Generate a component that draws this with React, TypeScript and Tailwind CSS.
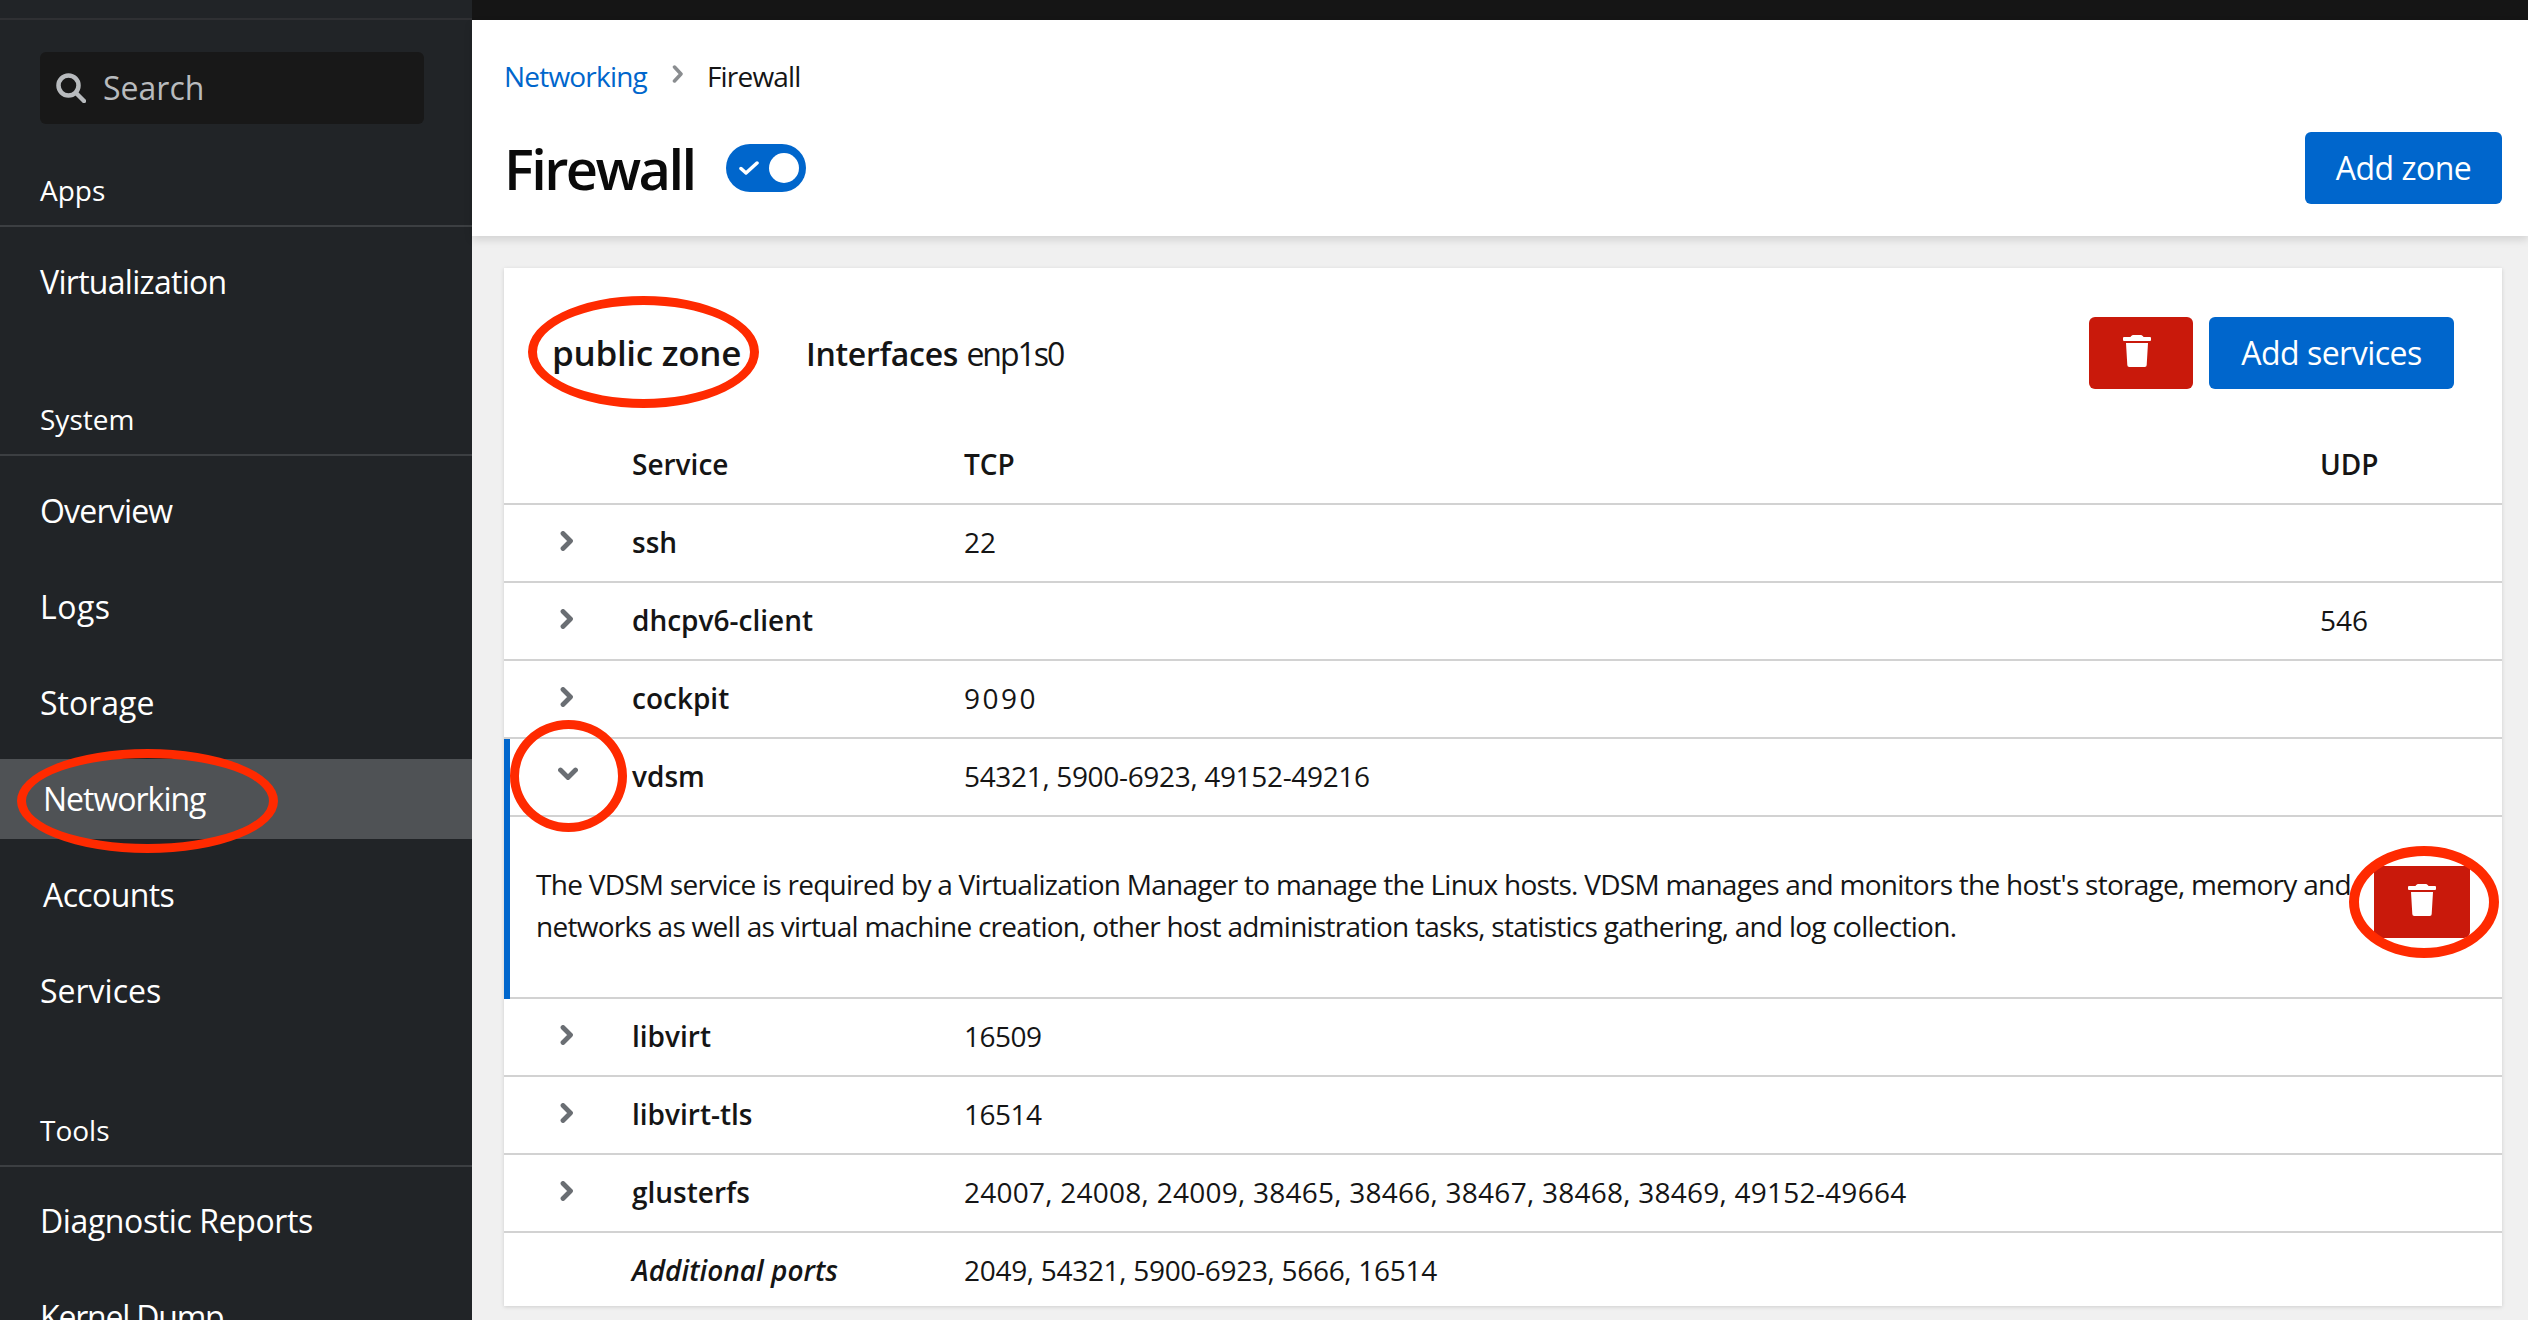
import React from "react";

const font = { fontFamily: '"Open Sans", "Noto Sans", sans-serif' };

function Trash({ className }: { className?: string }) {
  return (
    <svg viewBox="0 0 28 32" className={className} fill="currentColor">
      <path d="M10 0h8c1 0 2 1 2.500 2H27a1 1 0 0 1 1 1v2a1 1 0 0 1-1 1H1a1 1 0 0 1-1-1V3a1 1 0 0 1 1-1h6.500C8 1 9 0 10 0z" />
      <path d="M3 8h22l-1.300 22a2 2 0 0 1-2 2H6.300a2 2 0 0 1-2-2z" />
    </svg>
  );
}

function ChevronRight() {
  return (
    <svg viewBox="0 0 14 20" className="w-[14px] h-[20px]" fill="none" stroke="#6a6e73" strokeWidth="4.800" strokeLinecap="round" strokeLinejoin="round">
      <path d="M3 2.500 10.500 10 3 17.500" />
    </svg>
  );
}

function ChevronDown() {
  return (
    <svg viewBox="0 0 20 14" className="w-[20px] h-[14px]" fill="none" stroke="#6a6e73" strokeWidth="4.800" strokeLinecap="round" strokeLinejoin="round">
      <path d="M2.500 3 10 10.500 17.500 3" />
    </svg>
  );
}

function NavHeader({ label, className }: { label: string; className: string }) {
  return (
    <div className={`border-b-2 border-[#3c3f42] pl-10 h-[55px] text-[28px] leading-[36px] text-white ${className}`}>
      {label}
    </div>
  );
}

function NavItem({ label, active, shifted, track }: { label: string; active?: boolean; shifted?: boolean; track?: string }) {
  return (
    <div
      className={`h-20 flex items-center text-[32px] text-white ${track ?? ""} ${shifted ? "pl-[43px]" : "pl-10"} ${
        active ? "bg-[#4f5255]" : ""
      }`}
    >
      {label}
    </div>
  );
}

function Row({ name, tcp, udp, track }: { name: string; tcp?: string; udp?: string; track?: string }) {
  return (
    <div className="h-[78px] border-b-2 border-[#d2d2d2] flex items-center text-[28px] text-[#151515]">
      <div className="w-[128px] pl-[56px] flex items-center pb-1">
        <ChevronRight />
      </div>
      <div className="w-[332px] font-semibold pb-[2px]">{name}</div>
      <div className={`w-[1356px] pb-[2px] ${track ?? ""}`}>{tcp}</div>
      <div className="pb-[2px]">{udp}</div>
    </div>
  );
}

export default function App() {
  return (
    <div style={font} className="w-[2528px] h-[1320px] overflow-hidden flex bg-[#f0f0f0] relative">
      <aside className="w-[472px] h-full shrink-0 bg-[#212427] flex flex-col overflow-hidden">
        <div className="h-5 shrink-0 border-b-2 border-[#2f3033]" />
        <div className="mt-8 ml-10 w-[384px] h-[72px] shrink-0 rounded-md bg-[#181818] flex items-center pl-4 gap-[17px] text-[32px] text-[#b8bbbe]">
          <svg viewBox="0 0 30 30" className="w-[30px] h-[30px]" fill="none" stroke="currentColor" strokeWidth="4.500" strokeLinecap="round">
            <circle cx="12.500" cy="12.500" r="10" />
            <path d="m20 20 8 8" />
          </svg>
          Search
        </div>
        <NavHeader label="Apps" className="mt-12 shrink-0" />
        <div className="mt-[15px] flex flex-col gap-4 shrink-0">
          <NavItem label="Virtualization" track="tracking-[-0.7px]" />
        </div>
        <NavHeader label="System" className="mt-[79px] shrink-0" />
        <div className="mt-[15px] flex flex-col gap-4 shrink-0">
          <NavItem label="Overview" track="tracking-[-0.8px]" />
          <NavItem label="Logs" track="tracking-[0.5px]" />
          <NavItem label="Storage" />
          <NavItem label="Networking" active shifted track="tracking-[-1px]" />
          <NavItem label="Accounts" shifted track="tracking-[-0.6px]" />
          <NavItem label="Services" />
        </div>
        <NavHeader label="Tools" className="mt-[81px] shrink-0" />
        <div className="mt-[14px] flex flex-col gap-4 shrink-0">
          <NavItem label="Diagnostic Reports" track="tracking-[-0.4px]" />
          <NavItem label="Kernel Dump" track="tracking-[-1.2px]" />
        </div>
      </aside>

      <main className="flex-1 flex flex-col min-w-0">
        <div className="h-5 shrink-0 bg-[#151515]" />
        <header className="h-[216px] shrink-0 bg-white shadow-[0_4px_8px_rgba(3,3,3,0.12)] pl-[32px] pr-[26px] relative">
          <div className="pt-[20px] h-[92px] flex items-center text-[28px] tracking-[-0.8px] text-[#151515]">
            <span className="text-[#0066cc]">Networking</span>
            <svg viewBox="0 0 12 18" className="w-3 h-[18px] ml-[25px] mr-[23px] -mt-1" fill="none" stroke="#8a8d90" strokeWidth="3.500" strokeLinecap="round" strokeLinejoin="round">
              <path d="M2.500 2 9 9l-6.500 7" />
            </svg>
            <span>Firewall</span>
          </div>
          <div className="flex items-center justify-between h-[72px] mt-[20px]">
            <div className="flex items-center">
              <h1 className="text-[56px] font-semibold tracking-[-2.600px] text-[#0a0a0a]">Firewall</h1>
              <div className="ml-[32px] w-20 h-12 rounded-full bg-[#0066cc] flex items-center justify-between pl-[13px] pr-[7px]">
                <svg viewBox="0 0 20 14" className="w-5 h-[14px]" fill="none" stroke="white" strokeWidth="3.500" strokeLinecap="round" strokeLinejoin="round">
                  <path d="M2 7.500 7 12 18 2" />
                </svg>
                <span className="w-[30px] h-[30px] rounded-full bg-white" />
              </div>
            </div>
            <button className="w-[197px] h-[72px] rounded-md bg-[#0066cc] text-white text-[32px] tracking-[-0.5px]">Add zone</button>
          </div>
        </header>

        <div className="pt-[32px] pl-[32px] pr-[26px]">
          <section className="h-[1038px] bg-white shadow-[0_1px_4px_rgba(3,3,3,0.14)]">
            <div className="h-[157px] flex items-center pl-[48px] pr-[48px] pt-[14px]">
              <span className="w-[254px] text-[35px] font-semibold text-[#151515] tracking-[-0.3px]">public zone</span>
              <span className="text-[32px] text-[#151515]">
                <b className="font-semibold tracking-[-0.3px]">Interfaces</b> <span className="tracking-[-2px]">enp1s0</span>
              </span>
              <div className="ml-auto flex gap-4 mt-[-1px]">
                <button className="w-[104px] h-[72px] rounded-md bg-[#c9190b] text-white flex items-center justify-center pr-2">
                  <Trash className="w-7 h-8 -mt-1" />
                </button>
                <button className="w-[245px] h-[72px] rounded-md bg-[#0066cc] text-white text-[32px] tracking-[-0.5px]">Add services</button>
              </div>
            </div>
            <div className="h-[80px] border-b-2 border-[#d2d2d2] flex items-center text-[28px] font-semibold text-[#151515]">
              <div className="w-[128px]" />
              <div className="w-[332px]">Service</div>
              <div className="w-[1356px]">TCP</div>
              <div>UDP</div>
            </div>
            <Row name="ssh" tcp="22" />
            <Row name="dhcpv6-client" udp="546" />
            <Row name="cockpit" tcp="9090" track="tracking-[2.500px]" />
            <div className="border-l-[6px] border-[#0066cc]">
              <div className="h-[78px] border-b-2 border-[#d2d2d2] flex items-center text-[28px] text-[#151515]">
                <div className="w-[122px] pl-[48px] pb-[6px] flex items-center">
                  <ChevronDown />
                </div>
                <div className="w-[332px] font-semibold pb-[2px]">vdsm</div>
                <div className="pb-[2px] tracking-[-0.33px]">54321, 5900-6923, 49152-49216</div>
              </div>
              <div className="h-[182px] border-b-2 border-[#d2d2d2] flex items-start text-[28px] leading-[42px] tracking-[-0.73px] text-[#151515] pl-[26px] pr-[32px] relative">
                <p className="pt-[46px] whitespace-nowrap">
                  The VDSM service is required by a Virtualization Manager to manage the Linux hosts. VDSM manages and monitors the host's storage, memory and
                  <br />
                  networks as well as virtual machine creation, other host administration tasks, statistics gathering, and log collection.
                </p>
                <button className="absolute right-[32px] top-[49px] w-[96px] h-[72px] rounded-br-md bg-[#c9190b] text-white flex items-center justify-center">
                  <Trash className="w-7 h-8 -mt-1" />
                </button>
              </div>
            </div>
            <Row name="libvirt" tcp="16509" track="tracking-[-0.5px]" />
            <Row name="libvirt-tls" tcp="16514" track="tracking-[-0.5px]" />
            <Row name="glusterfs" tcp="24007, 24008, 24009, 38465, 38466, 38467, 38468, 38469, 49152-49664" track="tracking-[0.25px]" />
            <div className="h-[73px] flex items-center text-[28px] text-[#151515]">
              <div className="w-[128px]" />
              <div className="w-[332px] font-semibold italic">Additional ports</div>
              <div className="tracking-[-0.3px]">2049, 54321, 5900-6923, 5666, 16514</div>
            </div>
          </section>
        </div>
      </main>

      {/* red annotation ellipses drawn over the screenshot */}
      <div className="absolute left-[528px] top-[296px] w-[231px] h-[112px] rounded-[50%] border-[9px] border-[#ff2a00]" />
      <div className="absolute left-[17px] top-[749px] w-[261px] h-[104px] rounded-[50%] border-[9px] border-[#ff2a00]" />
      <div className="absolute left-[510px] top-[720px] w-[117px] h-[112px] rounded-[50%] border-[9px] border-[#ff2a00]" />
      <div className="absolute left-[2349px] top-[846px] w-[150px] h-[112px] rounded-[50%] border-[10px] border-[#ff2a00]" />
    </div>
  );
}
